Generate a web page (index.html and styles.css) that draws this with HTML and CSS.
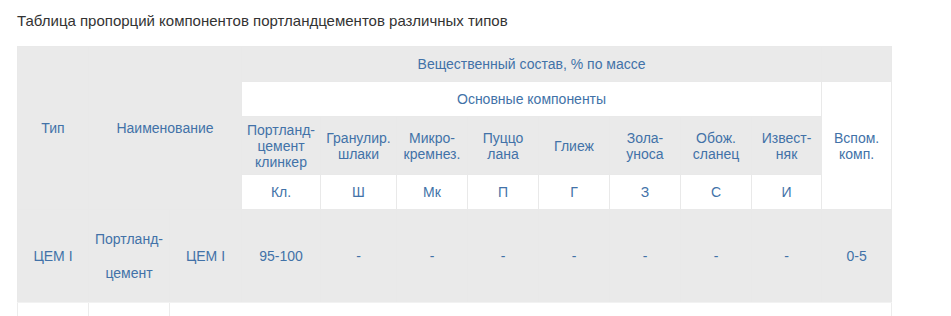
FILE: index.html
```html
<!DOCTYPE html>
<html lang="ru">
<head>
<meta charset="utf-8">
<title>Портландцементы</title>
<link rel="stylesheet" href="styles.css">
</head>
<body>
<div class="page">
  <p class="caption">Таблица пропорций компонентов портландцементов различных типов</p>
  <table class="cement">
    <colgroup>
      <col class="w71"><col class="w81"><col class="w72"><col class="w79"><col class="w76">
      <col class="w71"><col class="w71"><col class="w71"><col class="w71"><col class="w71">
      <col class="w70"><col class="w70">
    </colgroup>
    <tr class="r-top">
      <th rowspan="4">Тип</th>
      <th rowspan="4" colspan="2">Наименование</th>
      <th colspan="8">Вещественный состав, % по массе</th>
      <th></th>
    </tr>
    <tr class="r-main">
      <th colspan="8" class="light">Основные компоненты</th>
      <th rowspan="3" class="light">Вспом.<br>комп.</th>
    </tr>
    <tr class="r-names">
      <th>Портланд-<br>цемент<br>клинкер</th>
      <th>Гранулир.<br>шлаки</th>
      <th>Микро-<br>кремнез.</th>
      <th>Пуццо<br>лана</th>
      <th>Глиеж</th>
      <th>Зола-<br>уноса</th>
      <th>Обож.<br>сланец</th>
      <th>Извест-<br>няк</th>
    </tr>
    <tr class="r-codes">
      <td>Кл.</td><td>Ш</td><td>Мк</td><td>П</td><td>Г</td><td>З</td><td>С</td><td>И</td>
    </tr>
    <tr class="r-data">
      <td>ЦЕМ I</td>
      <td class="tall">Портланд-<br>цемент</td>
      <td>ЦЕМ I</td>
      <td>95-100</td>
      <td>-</td><td>-</td><td>-</td><td>-</td><td>-</td><td>-</td><td>-</td>
      <td>0-5</td>
    </tr>
    <tr class="r-next">
      <td></td><td></td><td colspan="10"></td>
    </tr>
  </table>
</div>
</body>
</html>
```
FILE: styles.css
```css
html, body {
  margin: 0;
  background: #fff;
}

.page {
  padding: 12px 17px 0;
  font-family: "Liberation Sans", Arial, sans-serif;
}

.caption {
  margin: 0 0 17px;
  font-size: 15px;
  line-height: 17px;
  color: #333;
}

.cement {
  width: 874px;
  table-layout: fixed;
  border-collapse: collapse;
  font-size: 14px;
  line-height: 16px;
  color: #4272a8;
}

.w70 { width: 70px; }
.w71 { width: 71px; }
.w72 { width: 72px; }
.w76 { width: 76px; }
.w79 { width: 79px; }
.w81 { width: 81px; }

.cement th,
.cement td {
  padding: 0 2px;
  font-weight: normal;
  text-align: center;
  vertical-align: middle;
  background: #eaeaea;
  border: 1px solid #e9e9e9;
}

.cement th.light,
.r-codes td {
  background: #fff;
}

.r-top { height: 35px; }
.r-main { height: 35px; }
.r-names { height: 58px; }
.r-codes { height: 35px; }
.r-data { height: 93px; }

.r-data td {
  border-bottom-color: #f2f2f2;
}

.r-data .tall {
  line-height: 34px;
}

.r-next { height: 40px; }

.r-next td {
  background: #fff;
  border-color: #ececec;
}
```
